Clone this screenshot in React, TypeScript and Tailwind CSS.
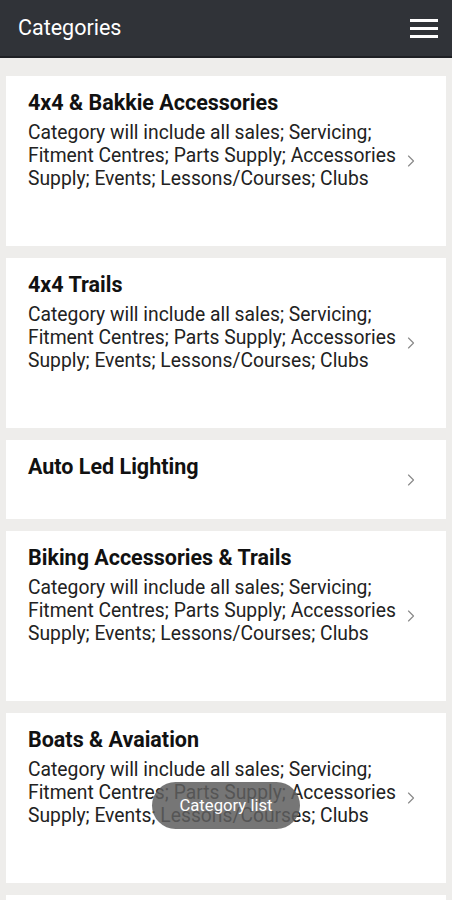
import { ChevronRight } from "lucide-react";

interface Category {
  title: string;
  description?: string;
}

const DESC =
  "Category will include all sales; Servicing; Fitment Centres; Parts Supply; Accessories Supply; Events; Lessons/Courses; Clubs";

const categories: Category[] = [
  { title: "4x4 & Bakkie Accessories", description: DESC },
  { title: "4x4 Trails", description: DESC },
  { title: "Auto Led Lighting" },
  { title: "Biking Accessories & Trails", description: DESC },
  { title: "Boats & Avaiation", description: DESC },
];

const CategoryCard = ({ item }: { item: Category }) => {
  return (
    <div
      className={`flex items-center bg-white pl-[22px] pr-[25px] ${
        item.description ? "h-[170px]" : "h-[79px]"
      }`}
    >
      <div className="flex-1 self-start pt-[14px]">
        <h2 className="text-[21.5px] font-bold leading-[26px] text-[#111]">
          {item.title}
        </h2>
        {item.description && (
          <p className="mt-[5px] text-[19.3px] leading-[23px] text-[#222]">
            {item.description}
          </p>
        )}
      </div>
      <ChevronRight className="h-[20px] w-[20px] shrink-0 text-[#8a8a8a]" strokeWidth={1.4} />
    </div>
  );
};

const App = () => {
  return (
    <div
      className="relative h-[900px] overflow-hidden bg-[#eeedeb]"
      style={{ fontFamily: "Roboto, 'Noto Sans', sans-serif" }}
    >
      <header className="flex h-[58px] items-center justify-between border-b-2 border-[#1e2024] bg-[#303338] pl-[18px] pr-[14px]">
        <h1 className="text-[21.5px] text-white">Categories</h1>
        <button className="flex flex-col gap-[5px] p-0">
          <span className="block h-[3px] w-[28px] bg-white" />
          <span className="block h-[3px] w-[28px] bg-white" />
          <span className="block h-[3px] w-[28px] bg-white" />
        </button>
      </header>

      <div className="flex flex-col gap-[12px] px-[6px] pt-[18px]">
        {categories.map((c) => (
          <CategoryCard key={c.title} item={c} />
        ))}
        {/* next card, only its top edge shows */}
        <div className="h-[170px] bg-white" />
      </div>

      {/* toast */}
      <div className="absolute left-[152px] top-[782px] flex h-[47px] w-[148px] items-center justify-center rounded-full bg-[#5e5e5e]/85 text-[16.7px] text-white">
        Category list
      </div>
    </div>
  );
};

export default App;
